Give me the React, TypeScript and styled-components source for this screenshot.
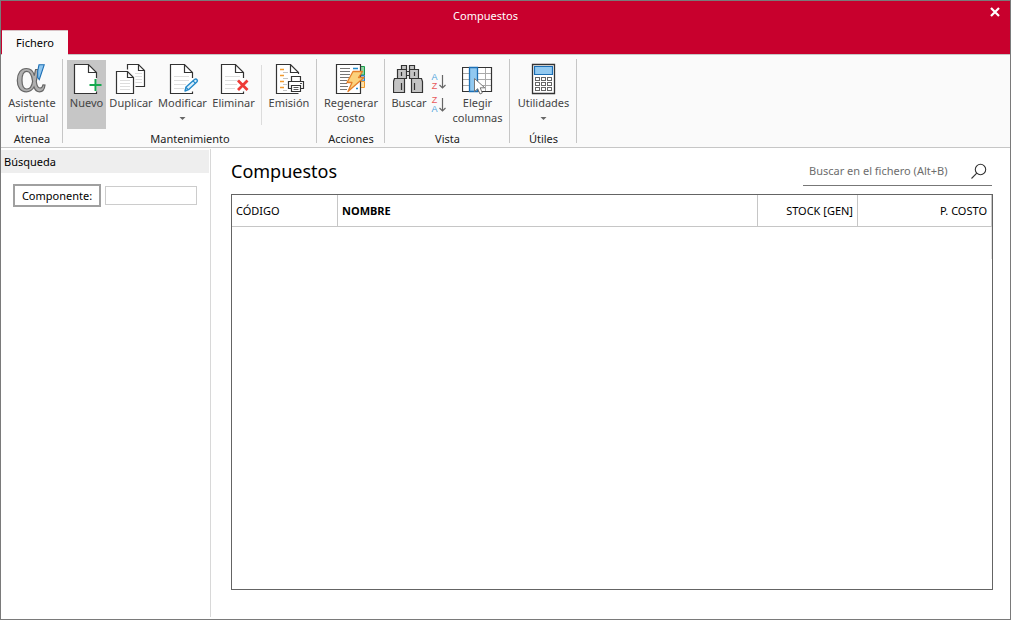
import React from "react";
import styled, { createGlobalStyle } from "styled-components";

const GlobalStyle = createGlobalStyle`
  *, *::before, *::after { box-sizing: border-box; }
  body { margin: 0; background: #fff; }
  body, button, input {
    font-family: "Noto Sans", "Open Sans", "Liberation Sans", sans-serif;
    font-size: 11px;
    color: #000;
  }
  button { background: none; border: 0; padding: 0; margin: 0; }
`;

const Window = styled.div`
  min-height: 100vh;
  display: flex;
  flex-direction: column;
  border: 1px solid #7a7a7a;
  background: #fff;
`;

const TitleBar = styled.header`
  display: flex;
  height: 29px;
  background: #c8002d;
`;

const WindowTitle = styled.div`
  flex: 1;
  padding-right: 10px;
  text-align: center;
  line-height: 30px;
  color: #fff;
`;

const CloseButton = styled.button`
  display: flex;
  align-items: center;
  justify-content: center;
  width: 30px;
  height: 22px;
`;

const TabBar = styled.nav`
  display: flex;
  height: 25px;
  padding-left: 1px;
  background: #c8002d;
  border-bottom: 1px solid #c6c6c6;
`;

const Tab = styled.button`
  height: 25px;
  width: 66px;
  padding-bottom: 2px;
  background: #fafafa;
  border-top: 1px solid #d8c0c4;
`;

const Ribbon = styled.div`
  display: flex;
  height: 93px;
  background: #fafafa;
  border-bottom: 1px solid #c6c6c6;
`;

const Group = styled.section`
  display: flex;
  flex-direction: column;
  padding: 5px 3px 0 4px;
`;

const GroupSeparator = styled.div`
  width: 1px;
  margin: 4px 0;
  background: #c6c6c6;
`;

const GroupItems = styled.div`
  display: flex;
  height: 69px;
`;

const GroupLabel = styled.div`
  margin-top: 2px;
  line-height: 16px;
  text-align: center;
  color: #222;
`;

const RibbonButton = styled.button<{ $width: number; $active?: boolean }>`
  display: flex;
  flex-direction: column;
  align-items: center;
  width: ${(p) => p.$width}px;
  padding-top: 3px;
  background: ${(p) => (p.$active ? "#c6c6c6" : "transparent")};
  color: #444;
  line-height: 15px;
  white-space: nowrap;

  svg { flex: none; }
`;

const Caption = styled.span`
  text-align: center;
  white-space: pre-line;
`;

const ItemSeparator = styled.div`
  width: 1px;
  height: 60px;
  margin: 5px 3px 0;
  background: #dcdcdc;
`;

const SortStack = styled.div`
  display: flex;
  flex-direction: column;
  align-items: center;
  gap: 5px;
  width: 20px;
  padding-top: 13px;
`;

const SortButton = styled.button`
  display: flex;
  align-items: center;
  gap: 1px;
`;

const SortLetters = styled.span`
  display: flex;
  flex-direction: column;
  width: 7px;
  font-family: "Liberation Sans", sans-serif;
  font-size: 9px;
  line-height: 9px;
  text-align: center;
`;

const SortLetter = styled.span<{ $color: string }>`
  color: ${(p) => p.$color};
`;

const Body = styled.div`
  flex: 1;
  display: flex;
  padding: 1px 0 2px;
`;

const Sidebar = styled.aside`
  width: 210px;
  border-right: 1px solid #d8d8d8;
  padding: 1px 1px 0 0;
`;

const SidebarTitle = styled.h2`
  margin: 0;
  padding-left: 3px;
  font-size: 11px;
  font-weight: 400;
  line-height: 23px;
  background: #eee;
`;

const Filter = styled.div`
  display: flex;
  align-items: center;
  gap: 4px;
  padding: 11px 12px;
`;

const FilterButton = styled.button`
  width: 88px;
  height: 23px;
  border: 2px solid #a0a0a0;
  background: #fff;
`;

const FilterInput = styled.input`
  flex: 1;
  min-width: 0;
  height: 19px;
  border: 1px solid #ccc;
  padding: 0 4px;
  background: #fff;
`;

const Main = styled.main`
  flex: 1;
  display: flex;
  flex-direction: column;
  padding: 9px 17px 27px 20px;
`;

const MainHeader = styled.div`
  display: flex;
  justify-content: space-between;
  padding-right: 1px;
  margin-bottom: 8px;
`;

const Heading = styled.h1`
  margin: 0;
  font-size: 18px;
  font-weight: 400;
  line-height: 26px;
`;

const SearchBox = styled.div`
  display: flex;
  align-items: center;
  width: 189px;
  height: 28px;
  padding: 0 4px 2px 6px;
  border-bottom: 1px solid #777;
`;

const SearchInput = styled.input`
  flex: 1;
  min-width: 0;
  border: 0;
  padding: 0;
  background: transparent;
  outline: none;

  &::placeholder { color: #6d6d6d; opacity: 1; }
`;

const SearchButton = styled.button`
  display: flex;
`;

const GridFrame = styled.div`
  flex: 1;
  border: 1px solid #646464;
`;

const Table = styled.table`
  width: 100%;
  table-layout: fixed;
  border-collapse: separate;
  border-spacing: 0;
`;

const HeadCell = styled.th<{ $width?: number; $right?: boolean; $bold?: boolean }>`
  width: ${(p) => (p.$width ? `${p.$width}px` : "auto")};
  height: 32px;
  padding: 0 4px;
  border-right: 1px solid #c6c6c6;
  border-bottom: 1px solid #c6c6c6;
  text-align: ${(p) => (p.$right ? "right" : "left")};
  font-weight: ${(p) => (p.$bold ? 700 : 400)};
  line-height: 16px;
`;

const EmptyCell = styled.td`
  height: 32px;
  padding: 0;
  border-right: 1px solid #e4e4e4;
`;

const Icon = ({ children, left = 0 }: { children: React.ReactNode; left?: number }) => (
  <svg width="32" height="32" viewBox={`${left} 0 32 32`} fill="none" aria-hidden="true">
    {children}
  </svg>
);

const Sheet = ({ lines }: { lines?: boolean }) => (
  <>
    <path d="M3.5 1.5H17.5L25.5 9.5V30.5H3.5Z" fill="#fff" />
    <path d="M25.5 15V9.5L17.5 1.5H3.5V30.5H25.5V28.5M17.5 1.5V9.5H25.5" stroke="#333" strokeWidth="1.2" />
    {lines && <path d="M7 13.5H22M7 17.5H22M7 21.5H19M7 25.5H17" stroke="#ddd" />}
  </>
);

const AlphaIcon = () => (
  <Icon>
    <path
      d="M10.5 5.5C15 5.5 17.3 8.5 18.3 12.5L19.6 6.5H22.3C22 11 20.8 15 20.3 18.5C20.8 22.5 21.8 25 24 25C25.8 25 26.6 23.8 27 21.8L29 22C28.6 26 26.8 28.8 23.5 28.8C20.6 28.8 19 26.8 18 24C16.3 27.2 13.8 28.8 10.3 28.8C4.5 28.8 1.3 24.3 1.3 17.4C1.3 10.2 4.8 5.5 10.5 5.5ZM10.8 8.3C7.5 8.3 6 11.5 6 17.2C6 23 7.6 26 10.8 26C14.2 26 16 22.8 16.6 18.4C15.8 11.5 14 8.3 10.8 8.3Z"
      fill="#b0b0b0"
      stroke="#666"
      strokeWidth="1.2"
      fillRule="evenodd"
    />
    <path d="M28.2 1.8H23L21.7 8V14.5L23.3 16.5Z" fill="#8fc6ef" stroke="#1c6fb5" strokeWidth="1.1" />
  </Icon>
);

const NewIcon = () => (
  <Icon>
    <Sheet />
    <path d="M24.5 16V28M18.5 22H30.5" stroke="#17a84f" strokeWidth="2" />
  </Icon>
);

const DuplicateIcon = () => (
  <Icon>
    <path d="M12.5 1.5H23.5L29.5 7.5V23.5H12.5Z" fill="#fff" stroke="#333" strokeWidth="1.2" />
    <path d="M23.5 1.5V7.5H29.5" stroke="#333" strokeWidth="1.2" />
    <path d="M20 10.5H27M20 13.5H27M20 16.5H27M20 19.5H27" stroke="#ddd" />
    <path d="M1.5 8.5H12.5L18.5 14.5V30.5H1.5Z" fill="#fff" stroke="#fafafa" strokeWidth="4" />
    <path d="M1.5 8.5H12.5L18.5 14.5V30.5H1.5Z" fill="#fff" stroke="#333" strokeWidth="1.2" />
    <path d="M12.5 8.5V14.5H18.5" stroke="#333" strokeWidth="1.2" />
    <path d="M5 17.5H15M5 20.5H15M5 23.5H15M5 26.5H15" stroke="#ddd" />
  </Icon>
);

const EditIcon = () => (
  <Icon>
    <Sheet lines />
    <path d="M18 28L19 24L27.5 16.5Q29 15.5 30 16.7Q31 18 29.8 19L21.5 26.7Z" fill="#d9eefb" stroke="#2389c9" strokeWidth="1.4" strokeLinejoin="round" />
    <path d="M26 17.8L28.5 20.3M19 24.3L21.3 26.6" stroke="#2389c9" strokeWidth="1.2" />
  </Icon>
);

const DeleteIcon = () => (
  <Icon>
    <Sheet lines />
    <path d="M20 17.5L29.5 27M29.5 17.5L20 27" stroke="#ee3a36" strokeWidth="2.8" />
  </Icon>
);

const PrintIcon = () => (
  <Icon>
    <path d="M3.5 1.5H17.5L25.5 9.5V30.5H3.5Z" fill="#fff" />
    <path d="M25.5 11V9.5L17.5 1.5H3.5V30.5H25.5M17.5 1.5V9.5H25.5" stroke="#333" strokeWidth="1.2" />
    <path d="M7 6.5H11M7 12.5H11M7 18.5H11M7 24.5H11" stroke="#f29a2e" strokeWidth="1.4" />
    <path d="M10 9.5H15M10 15.5H15M10 21.5H14M10 27.5H14" stroke="#c4c4c4" />
    <path d="M16.5 12H29V17H32V27H29V29.5H17V27H14V17H16.5Z" fill="#fff" />
    <path d="M18.5 18.5V13.5H27.5V18.5" fill="#fff" stroke="#333" strokeWidth="1.2" />
    <path d="M18.5 25.5H15.5V18.5H30.5V25.5H27.5" fill="#fff" stroke="#333" strokeWidth="1.2" />
    <path d="M18.5 22.5H27.5V28.5H18.5Z" fill="#fff" stroke="#333" strokeWidth="1.2" />
    <path d="M20.5 24.5H25.5M20.5 26.5H25.5M27 20.5H29" stroke="#555" />
  </Icon>
);

const RegenerateIcon = () => (
  <Icon left={1}>
    <path d="M26.5 3.5H30.5V12H26.5Z" fill="#8ed3a0" stroke="#189a4c" />
    <path d="M26.5 12.5H30.5V18H26.5Z" fill="#9bcaf0" stroke="#2c7fc3" />
    <path d="M26.5 18.5H30.5V24.5H26.5Z" fill="#fde0a8" stroke="#f29a2e" />
    <path d="M2.5 1.5H26.5V30.5H2.5Z" fill="#fff" stroke="#333" strokeWidth="1.2" />
    <path d="M6 5.5H16M6 8.5H16M6 11.5H16M6 14.5H16M6 17.5H13M6 20.5H13M6 23.5H14M6 26.5H13" stroke="#777" />
    <path d="M19 5.5H24M22 25.5H24" stroke="#2389c9" strokeWidth="1.4" />
    <path d="M19 8.5H28.5L24.5 14.5H30L14 28.5L18 19.5H13Z" fill="#fbd27d" stroke="#e5802a" strokeWidth="1.3" strokeLinejoin="round" />
  </Icon>
);

const BinocularsIcon = () => (
  <Icon left={1}>
    <g fill="#c4c4c4" stroke="#333" strokeWidth="1.2">
      <path d="M14.5 8.5H17.5V12.5H14.5Z" fill="#fff" />
      <path d="M9.5 2.5H14.5V6.5H9.5ZM17.5 2.5H22.5V6.5H17.5Z" />
      <path d="M5.5 6.5H14.5V15.5H5.5ZM17.5 6.5H26.5V15.5H17.5Z" />
      <path d="M2.5 15.5H12.5V29.5H1.5V18.5ZM19.5 15.5H29.5L30.5 18.5V29.5H19.5Z" />
      <path d="M9.5 20V27M22.5 20V27M9.5 9V13M22.5 9V13" />
    </g>
  </Icon>
);

const SortGlyph = ({ descending }: { descending?: boolean }) => (
  <>
    <SortLetters>
      <SortLetter $color={descending ? "#e8595c" : "#4aa3dc"}>{descending ? "Z" : "A"}</SortLetter>
      <SortLetter $color={descending ? "#4aa3dc" : "#e8595c"}>{descending ? "A" : "Z"}</SortLetter>
    </SortLetters>
    <svg width="8" height="16" viewBox="0 0 8 16" fill="none" aria-hidden="true">
      <path d="M3.5 1V14M0.5 11L3.5 14L6.5 11" stroke="#666" strokeWidth="1.2" />
    </svg>
  </>
);

const ColumnsIcon = () => (
  <Icon left={1}>
    <path d="M1.5 4.5H30.5V28.5H1.5Z" fill="#fff" />
    <path d="M1 10.5H31M1 16.5H31M1 22.5H31M24.5 4V29" stroke="#aaa" />
    <path d="M1.5 4.5H30.5V28.5H1.5Z" stroke="#333" strokeWidth="1.2" />
    <path d="M8.5 4.5H16.5V28.5H8.5Z" fill="#92c9f0" stroke="#1c6fb5" strokeWidth="1.3" />
    <path d="M13.5 15.5V28.5L16.7 25.7L19 31L21.3 30L19.2 24.8H23.8Z" fill="#fff" stroke="#777" />
  </Icon>
);

const CalculatorIcon = () => (
  <Icon left={1}>
    <path d="M5.5 1.5H27.5V30.5H5.5Z" fill="#fff" stroke="#333" strokeWidth="1.3" />
    <path d="M7.5 3.5H25.5V11.5H7.5Z" fill="#92c9f0" stroke="#1c6fb5" strokeWidth="1.2" />
    <g fill="#fff" stroke="#666">
      {[14.5, 19.5, 24.5].map((y) =>
        [8.5, 14.5, 20.5].map((x) => <rect key={`${x}-${y}`} x={x} y={y} width="4" height="3" />)
      )}
    </g>
  </Icon>
);

const DropArrow = () => (
  <svg width="7" height="15" viewBox="0 0 7 15" aria-hidden="true">
    <path d="M0.5 7H6.5L3.5 10Z" fill="#666" />
  </svg>
);

export default function App() {
  return (
    <>
      <GlobalStyle />
      <Window>
        <TitleBar>
          <WindowTitle>Compuestos</WindowTitle>
          <CloseButton aria-label="Cerrar">
            <svg width="10" height="10" viewBox="0 0 10 10" aria-hidden="true">
              <path d="M1 1L9 9M9 1L1 9" stroke="#fff" strokeWidth="2.2" />
            </svg>
          </CloseButton>
        </TitleBar>
        <TabBar>
          <Tab>Fichero</Tab>
        </TabBar>
        <Ribbon>
          <Group>
            <GroupItems>
              <RibbonButton $width={54}><AlphaIcon /><Caption>{"Asistente\nvirtual"}</Caption></RibbonButton>
            </GroupItems>
            <GroupLabel>Atenea</GroupLabel>
          </Group>
          <GroupSeparator />
          <Group>
            <GroupItems>
              <RibbonButton $width={39} $active><NewIcon /><Caption>Nuevo</Caption></RibbonButton>
              <RibbonButton $width={50}><DuplicateIcon /><Caption>Duplicar</Caption></RibbonButton>
              <RibbonButton $width={53}><EditIcon /><Caption>Modificar</Caption><DropArrow /></RibbonButton>
              <RibbonButton $width={49}><DeleteIcon /><Caption>Eliminar</Caption></RibbonButton>
              <ItemSeparator />
              <RibbonButton $width={48}><PrintIcon /><Caption>Emisión</Caption></RibbonButton>
            </GroupItems>
            <GroupLabel>Mantenimiento</GroupLabel>
          </Group>
          <GroupSeparator />
          <Group>
            <GroupItems>
              <RibbonButton $width={60}><RegenerateIcon /><Caption>{"Regenerar\ncosto"}</Caption></RibbonButton>
            </GroupItems>
            <GroupLabel>Acciones</GroupLabel>
          </Group>
          <GroupSeparator />
          <Group>
            <GroupItems>
              <RibbonButton $width={40}><BinocularsIcon /><Caption>Buscar</Caption></RibbonButton>
              <SortStack>
                <SortButton aria-label="Orden ascendente"><SortGlyph /></SortButton>
                <SortButton aria-label="Orden descendente"><SortGlyph descending /></SortButton>
              </SortStack>
              <RibbonButton $width={57}><ColumnsIcon /><Caption>{"Elegir\ncolumnas"}</Caption></RibbonButton>
            </GroupItems>
            <GroupLabel>Vista</GroupLabel>
          </Group>
          <GroupSeparator />
          <Group>
            <GroupItems>
              <RibbonButton $width={59}><CalculatorIcon /><Caption>Utilidades</Caption><DropArrow /></RibbonButton>
            </GroupItems>
            <GroupLabel>Útiles</GroupLabel>
          </Group>
          <GroupSeparator />
        </Ribbon>
        <Body>
          <Sidebar>
            <SidebarTitle>Búsqueda</SidebarTitle>
            <Filter>
              <FilterButton id="component-label">Componente:</FilterButton>
              <FilterInput type="text" aria-labelledby="component-label" />
            </Filter>
          </Sidebar>
          <Main>
            <MainHeader>
              <Heading>Compuestos</Heading>
              <SearchBox>
                <SearchInput type="text" placeholder="Buscar en el fichero (Alt+B)" aria-label="Buscar en el fichero" />
                <SearchButton aria-label="Buscar">
                  <svg width="18" height="18" viewBox="0 0 18 18" fill="none" stroke="#333" strokeWidth="1.1" aria-hidden="true">
                    <circle cx="10.5" cy="7.5" r="5.2" />
                    <path d="M6.8 11.2L1.5 16.5" />
                  </svg>
                </SearchButton>
              </SearchBox>
            </MainHeader>
            <GridFrame>
              <Table>
                <thead>
                  <tr>
                    <HeadCell scope="col" $width={106}>CÓDIGO</HeadCell>
                    <HeadCell scope="col" $bold>NOMBRE</HeadCell>
                    <HeadCell scope="col" $width={100} $right>STOCK [GEN]</HeadCell>
                    <HeadCell scope="col" $width={134} $right>P. COSTO</HeadCell>
                  </tr>
                </thead>
                <tbody>
                  <tr>
                    <EmptyCell colSpan={4} />
                  </tr>
                </tbody>
              </Table>
            </GridFrame>
          </Main>
        </Body>
      </Window>
    </>
  );
}
